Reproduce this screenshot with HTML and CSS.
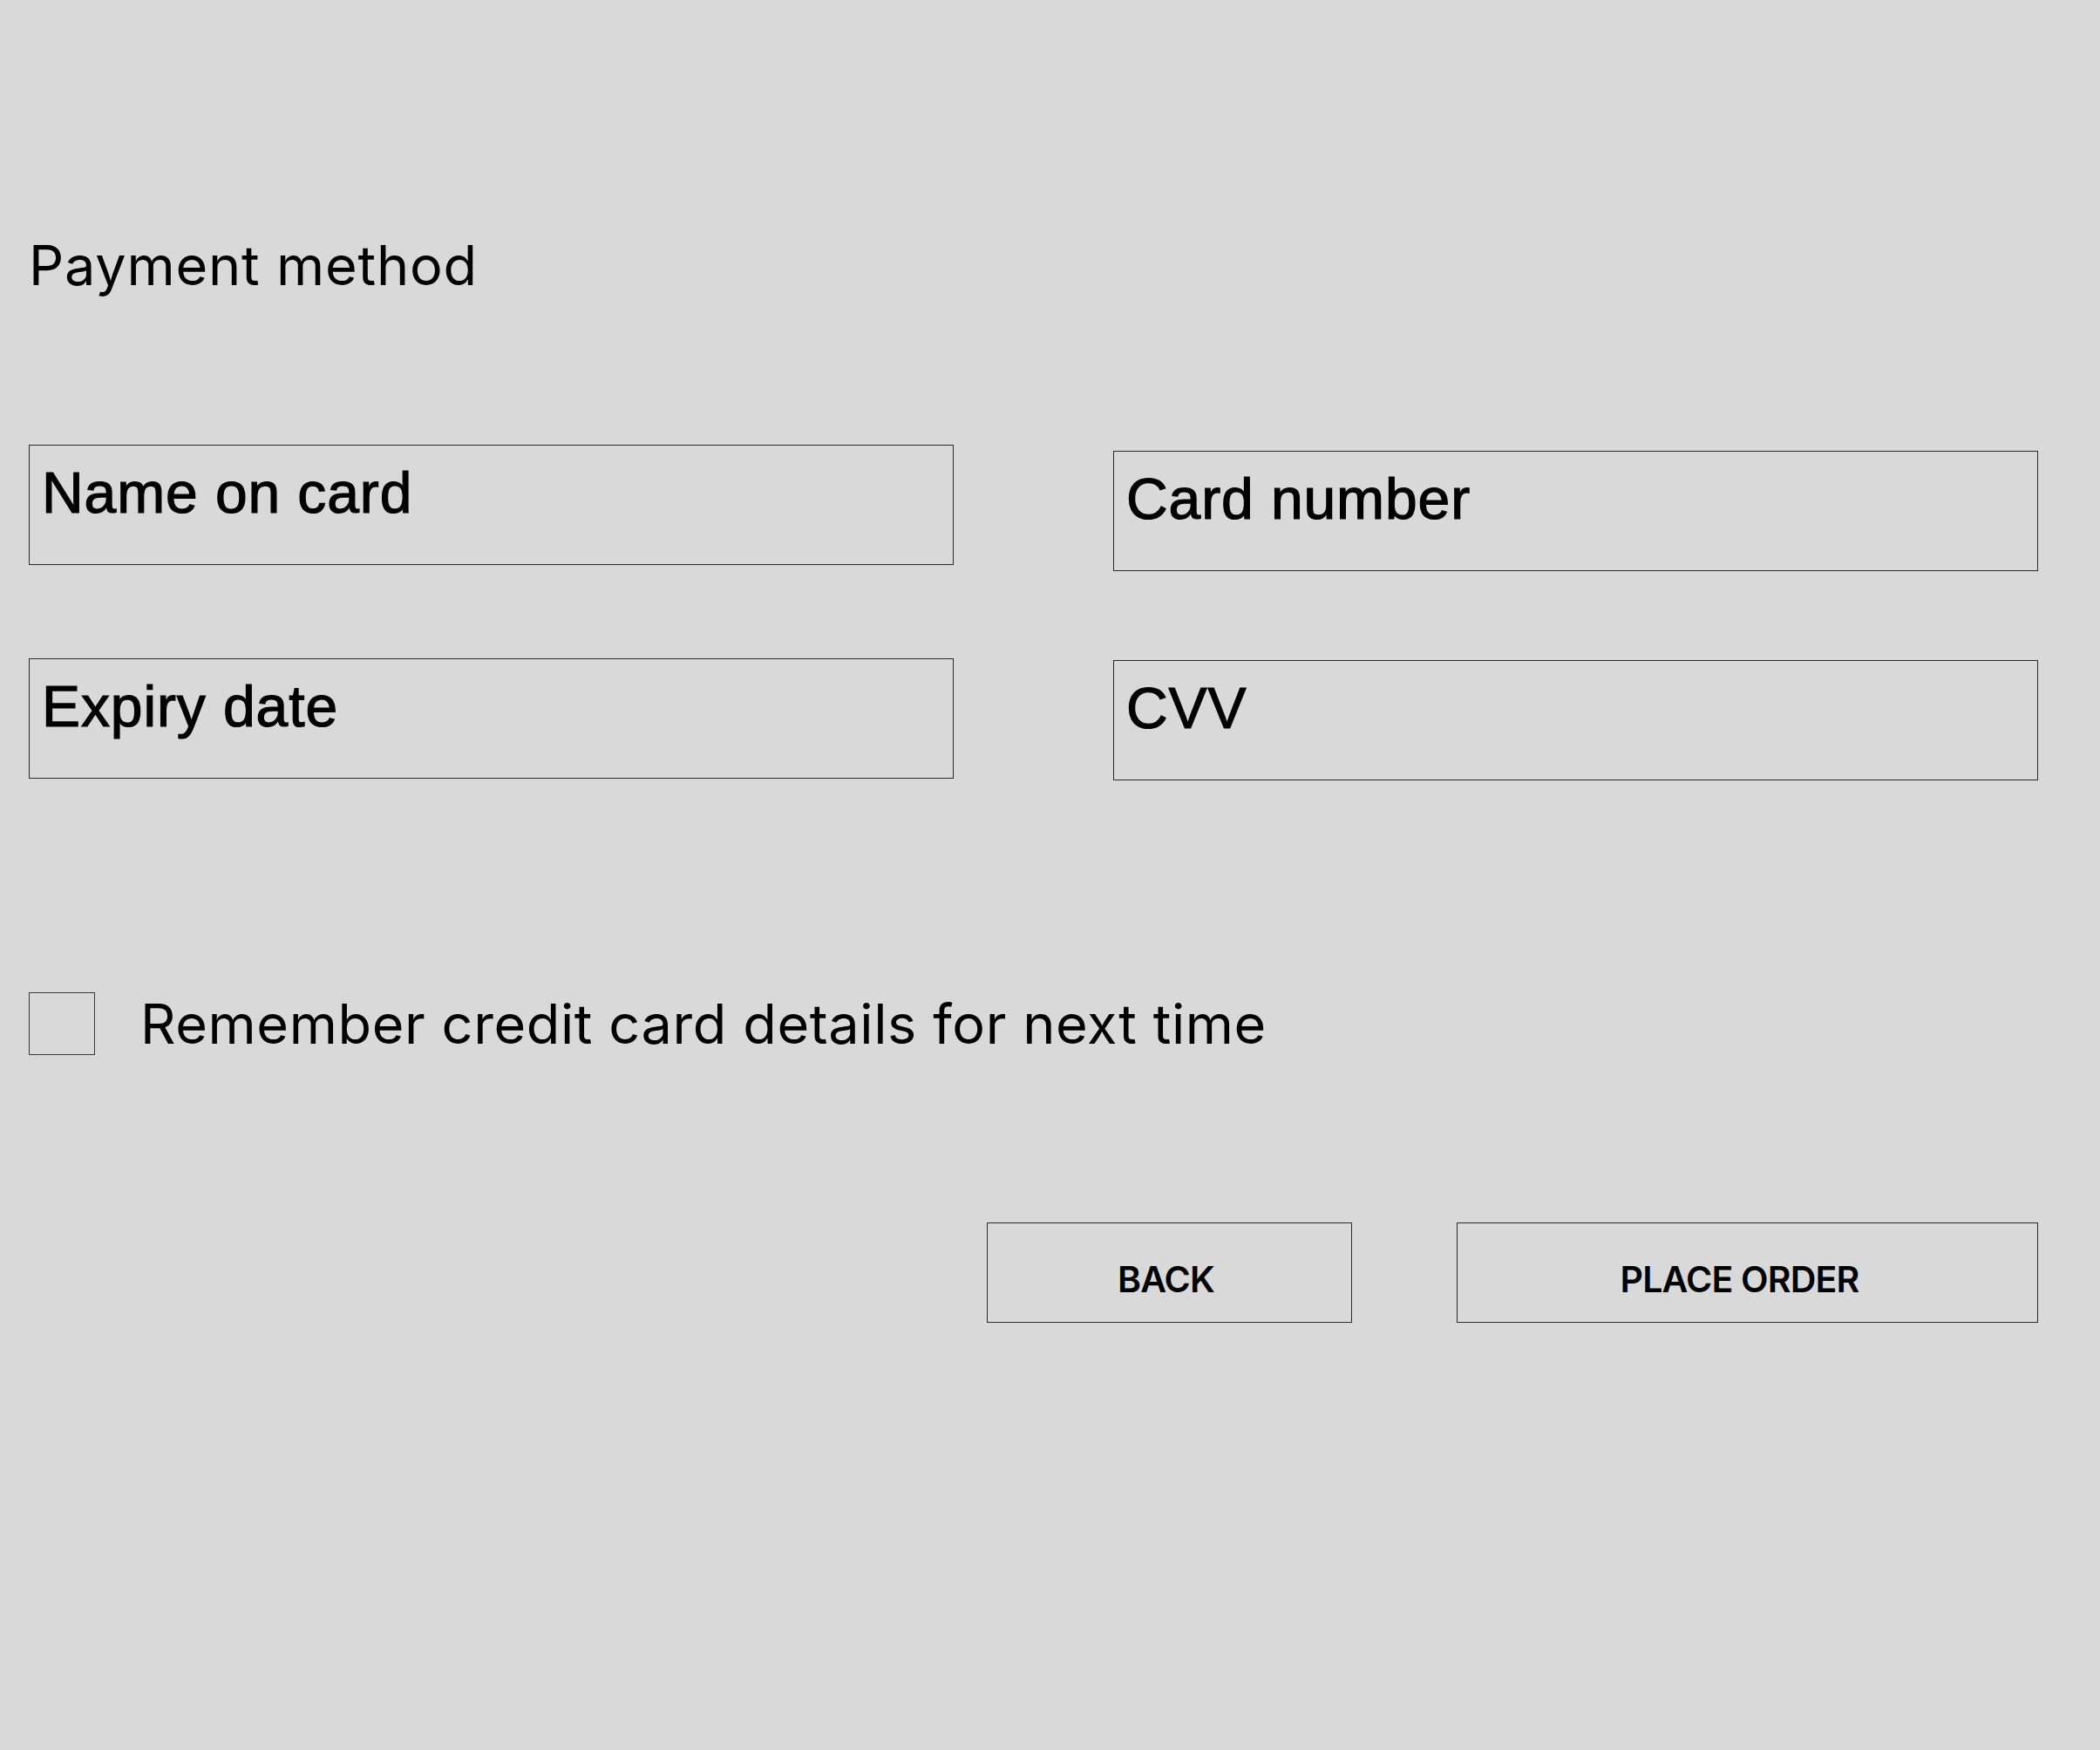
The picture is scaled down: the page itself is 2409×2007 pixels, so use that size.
FILE: index.html
```html
<!DOCTYPE html>
<html lang="en">
<head>
<meta charset="utf-8">
<title>Payment method</title>
<link rel="stylesheet" href="styles.css">
</head>
<body>
<main class="page">
  <h2 class="title">Payment method</h2>
  <div class="fields">
    <div class="col col-left">
      <label class="field"><span class="field-label">Name on card</span></label>
      <label class="field"><span class="field-label">Expiry date</span></label>
    </div>
    <div class="col col-right">
      <label class="field"><span class="field-label">Card number</span></label>
      <label class="field"><span class="field-label">CVV</span></label>
    </div>
  </div>
  <label class="remember">
    <span class="checkbox"></span>
    <span class="remember-text">Remember credit card details for next time</span>
  </label>
  <div class="actions">
    <button class="btn btn-back" type="button">BACK</button>
    <button class="btn btn-order" type="button">PLACE ORDER</button>
  </div>
</main>
</body>
</html>
```

FILE: styles.css
```css
html, body {
  margin: 0;
  padding: 0;
  background: #d9d9d9;
}

.page {
  box-sizing: border-box;
  width: 2409px;
  min-height: 2007px;
  padding: 266px 71px 0 33px;
  color: #000;
}

.title {
  margin: 0;
  font-family: Inter, "Noto Sans", sans-serif;
  font-weight: 400;
  font-size: 63px;
  letter-spacing: 0.8px;
  line-height: 76px;
  height: 76px;
}

.fields {
  display: flex;
  justify-content: space-between;
  margin-top: 168px;
}

.col {
  display: flex;
  flex-direction: column;
  width: 1061px;
}

.col-left {
  gap: 107px;
}

.col-right {
  padding-top: 7px;
  gap: 102px;
}

.field {
  box-sizing: border-box;
  display: block;
  height: 138px;
  border: 1px solid #2a2a2a;
  padding: 17px 14px 0;
}

.field-label {
  display: block;
  font-family: "Liberation Sans", Arial, sans-serif;
  font-size: 66px;
  letter-spacing: 0.9px;
  line-height: 74px;
  color: #000;
  -webkit-text-stroke: 1.2px #000;
}

.remember {
  display: flex;
  align-items: center;
  gap: 52px;
  margin-top: 241px;
  height: 76px;
}

.checkbox {
  box-sizing: border-box;
  display: block;
  width: 76px;
  height: 72px;
  border: 1px solid #3a3a3a;
}

.remember-text {
  font-family: Inter, "Noto Sans", sans-serif;
  font-size: 63px;
  letter-spacing: 0.6px;
  line-height: 76px;
}

.actions {
  display: flex;
  justify-content: flex-end;
  gap: 120px;
  margin-top: 190px;
}

.btn {
  box-sizing: border-box;
  display: block;
  height: 115px;
  margin: 0;
  padding: 15px 8px 0 0;
  border: 1px solid #2a2a2a;
  background: transparent;
  color: #000;
  font-family: Inter, "Noto Sans", sans-serif;
  font-weight: 600;
  font-size: 41px;
  letter-spacing: -0.8px;
  line-height: 52px;
  text-align: center;
}

.btn-back {
  width: 419px;
}

.btn-order {
  width: 667px;
  padding-right: 18px;
}
```
